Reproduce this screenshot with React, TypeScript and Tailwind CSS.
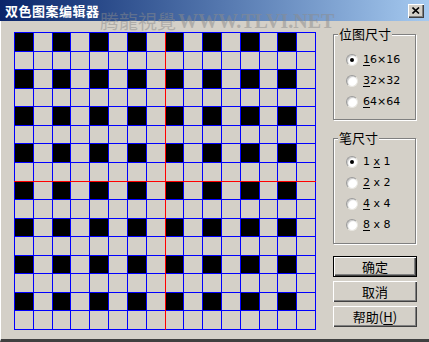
import React from "react";

const cjk = { fontFamily: '"Noto Sans CJK SC", "Noto Sans", sans-serif' };
const lat = { fontFamily: 'Tahoma, "DejaVu Sans", "Liberation Sans", "Noto Sans CJK SC", sans-serif' };

function Canvas() {
  const n = 16;
  const xs = Array.from({ length: n + 1 }, (_, i) => Math.round(i * 18.8125));
  const ys = Array.from({ length: n + 1 }, (_, i) => Math.round(i * 18.5625));
  const W = xs[n] + 1;
  const H = ys[n] + 1;
  const cells: React.ReactNode[] = [];
  for (let r = 0; r < n; r += 2) {
    for (let c = 0; c < n; c += 2) {
      cells.push(
        <rect key={`${r}-${c}`} x={xs[c]} y={ys[r]} width={xs[c + 1] - xs[c]} height={ys[r + 1] - ys[r]} fill="#000" />
      );
    }
  }
  return (
    <svg width={W} height={H} viewBox={`0 0 ${W} ${H}`} shapeRendering="crispEdges" className="block">
      {cells}
      {xs.map((x, i) => (
        <rect key={`v${i}`} x={x} y={0} width={1} height={H} fill="#0000ff" />
      ))}
      {ys.map((y, i) => (
        <rect key={`h${i}`} x={0} y={y} width={W} height={1} fill="#0000ff" />
      ))}
      <rect x={xs[8]} y={0} width={1} height={H} fill="#ff0000" />
      <rect x={0} y={ys[8]} width={W} height={1} fill="#ff0000" />
    </svg>
  );
}

function Radio({ checked, children }: { checked?: boolean; children: React.ReactNode }) {
  return (
    <div className="flex items-center h-[21px]">
      <div className="ml-[12px] w-[12px] h-[12px] rounded-full bg-white border border-t-[#9a9a9a] border-l-[#9a9a9a] border-r-[#e8e6e0] border-b-[#e8e6e0] shadow-[inset_1px_1px_1px_#c8c8c8] flex items-center justify-center">
        {checked && <div className="w-[4px] h-[4px] rounded-full bg-black" />}
      </div>
      <div className="ml-[5px] text-[11px] text-black leading-none" style={lat}>
        {children}
      </div>
    </div>
  );
}

function GroupBox({ label, className, children }: { label: string; className: string; children: React.ReactNode }) {
  return (
    <div className={`relative border border-[#808080] shadow-[inset_1px_1px_0_#fff,1px_1px_0_#fff] ${className}`}>
      <span className="absolute left-[4px] top-[-9px] bg-[#d4d0c8] px-[1px] text-[13px] leading-[16px] text-black" style={cjk}>
        {label}
      </span>
      {children}
    </div>
  );
}

function Button({ children, def }: { children: React.ReactNode; def?: boolean }) {
  return (
    <div
      className={
        def
          ? "h-[21px] w-[84px] border border-black bg-[#d4d0c8] shadow-[inset_1px_1px_0_#fff,inset_-1px_-1px_0_#404040,inset_-2px_-2px_0_#808080] flex items-center justify-center"
          : "h-[21px] w-[84px] bg-[#d4d0c8] shadow-[inset_1px_1px_0_#fff,inset_-1px_-1px_0_#404040,inset_-2px_-2px_0_#808080] flex items-center justify-center"
      }
    >
      <span className="text-[13px] leading-none text-black" style={cjk}>
        {children}
      </span>
    </div>
  );
}

export default function App() {
  return (
    <div className="w-[429px] h-[342px] bg-[#d4d0c8] flex flex-col relative overflow-hidden">
      <div className="h-[21px] shrink-0 flex justify-between bg-gradient-to-r from-[#0a246a] to-[#a6caf0] pl-[5px] pr-[5px]">
        <span className="text-white font-bold text-[13px] leading-[21px] tracking-[0.5px]" style={cjk}>
          双色图案编辑器
        </span>
        <div className="mt-[4px] w-[16px] h-[14px] bg-[#d4d0c8] shadow-[inset_1px_1px_0_#fff,inset_-1px_-1px_0_#404040,inset_-2px_-2px_0_#808080] flex items-center justify-center">
          <svg width="8" height="7" viewBox="0 0 8 7" className="mb-[1px]">
            <path d="M0.5 0.5 L7 6.5 M7 0.5 L0.5 6.5" stroke="#000" strokeWidth="1.6" fill="none" />
          </svg>
        </div>
      </div>
      <div className="flex flex-1 border-l border-l-white border-b-[3px] border-b-[#404040]">
        <div className="ml-[13px] mt-[11px] h-[298px]">
          <Canvas />
        </div>
        <div className="ml-[17px] mt-[13px] w-[84px] flex flex-col">
          <GroupBox label="位图尺寸" className="w-[83px] h-[86px] pt-[14px]">
            <Radio checked>
              <span className="underline underline-offset-2">1</span>6×16
            </Radio>
            <Radio>
              <span className="underline underline-offset-2">3</span>2×32
            </Radio>
            <Radio>
              <span className="underline underline-offset-2">6</span>4×64
            </Radio>
          </GroupBox>
          <GroupBox label="笔尺寸" className="mt-[18px] w-[83px] h-[106px] pt-[12px]">
            <Radio checked>
              1 <span className="underline underline-offset-2">x</span> 1
            </Radio>
            <Radio>
              <span className="underline underline-offset-2">2</span> x 2
            </Radio>
            <Radio>
              <span className="underline underline-offset-2">4</span> x 4
            </Radio>
            <Radio>
              <span className="underline underline-offset-2">8</span> x 8
            </Radio>
          </GroupBox>
          <div className="mt-[12px] flex flex-col gap-[4px]">
            <Button def>确定</Button>
            <Button>取消</Button>
            <Button>
              帮助(<span className="underline underline-offset-2">H</span>)
            </Button>
          </div>
        </div>
      </div>
      <div className="absolute left-[100px] top-[9px] flex items-end text-[#8c8c8c] opacity-50 pointer-events-none whitespace-nowrap">
        <span className="text-[19px] leading-[24px]" style={{ fontFamily: '"Noto Sans CJK TC", "Noto Sans CJK SC", serif' }}>
          腾龍視覺
        </span>
        <span className="text-[20px] leading-[24px] font-bold ml-[2px]" style={{ fontFamily: '"Liberation Serif", serif' }}>
          WWW.TLVI.NET
        </span>
      </div>
    </div>
  );
}
